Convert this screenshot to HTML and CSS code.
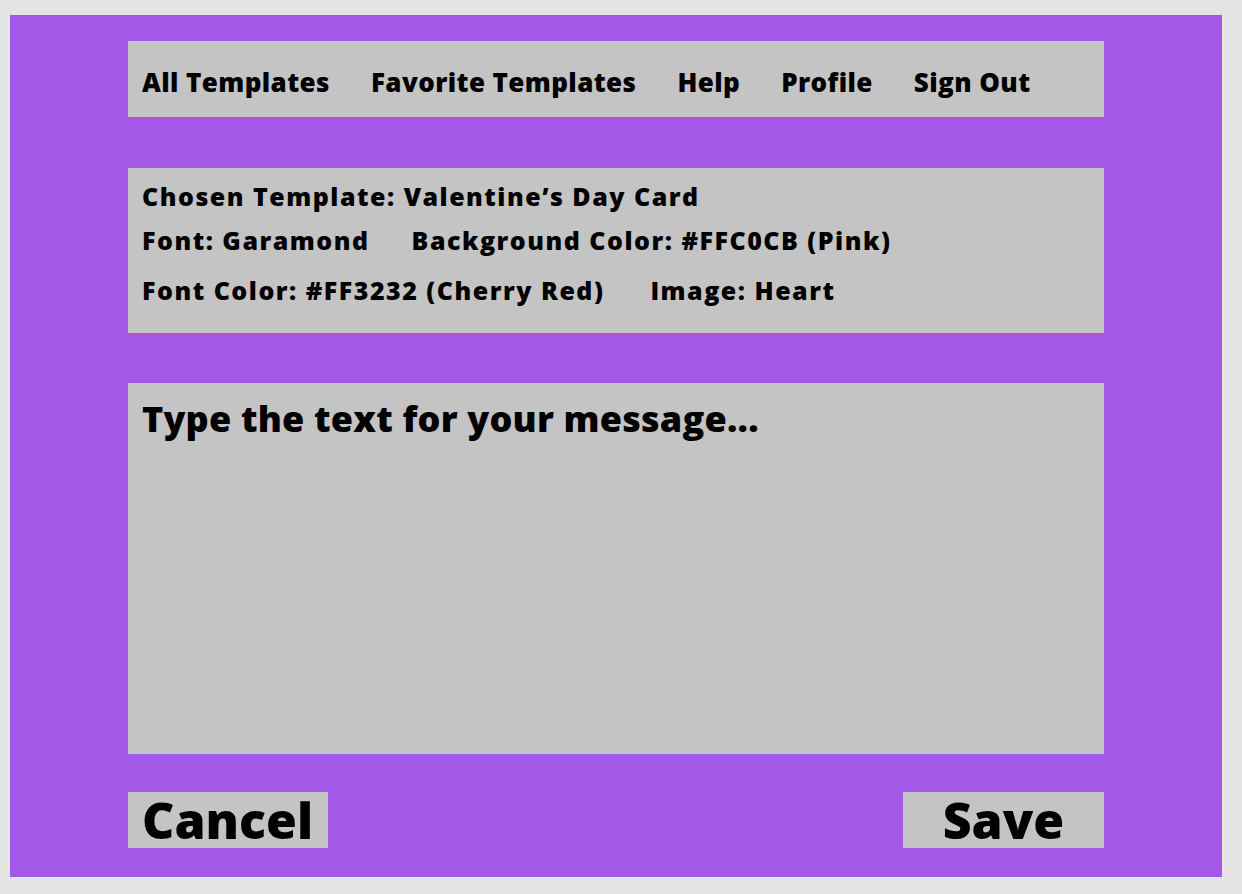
FILE: index.html
```html
<!DOCTYPE html>
<html lang="en">
<head>
  <meta charset="UTF-8">
  <title>Edit Card</title>
  <link rel="stylesheet" href="styles.css">
</head>
<body>
  <div class="panel">
    <nav class="nav">
      <a class="nav-link">All Templates</a>
      <a class="nav-link">Favorite Templates</a>
      <a class="nav-link">Help</a>
      <a class="nav-link">Profile</a>
      <a class="nav-link">Sign Out</a>
    </nav>

    <div class="info">
      <div class="info-row">Chosen Template: Valentine’s Day Card</div>
      <div class="info-row">
        <span class="item first-a">Font: Garamond</span>
        <span class="item">Background Color: #FFC0CB (Pink)</span>
      </div>
      <div class="info-row row-last">
        <span class="item first-b">Font Color: #FF3232 (Cherry Red)</span>
        <span class="item">Image: Heart</span>
      </div>
    </div>

    <div class="message">Type the text for your message...</div>

    <div class="actions">
      <button class="btn btn-cancel">Cancel</button>
      <button class="btn btn-save">Save</button>
    </div>
  </div>
</body>
</html>
```

FILE: styles.css
```css
body {
  margin: 0;
  background: #e5e5e5;
  font-family: "Open Sans", sans-serif;
  font-weight: 800;
  color: #000;
  padding: 15px 20px 17px 10px;
}
.panel {
  background: #a358e8;
  padding: 26px 118px 29px 118px;
  height: 807px;
}
.nav {
  display: flex;
  gap: 41px;
  align-items: center;
  background: #c4c4c4;
  height: 76px;
  padding: 6px 14px 0;
  box-sizing: border-box;
  font-size: 26px;
  letter-spacing: 0.4px;
}
.info {
  margin-top: 51px;
  background: #c4c4c4;
  height: 165px;
  box-sizing: border-box;
  padding: 6px 14px 0;
  font-size: 25px;
  letter-spacing: 1.5px;
}
.info-row {
  height: 44px;
  line-height: 44px;
}
.row-last {
  margin-top: 6px;
}
.first-a { margin-right: 34px; }
.first-b { margin-right: 38px; }
.message {
  margin-top: 50px;
  background: #c4c4c4;
  height: 371px;
  box-sizing: border-box;
  padding: 11px 14px;
  font-size: 36px;
  letter-spacing: 0.2px;
}
.actions {
  display: flex;
  justify-content: space-between;
  margin-top: 38px;
}
.btn {
  font-family: inherit;
  font-weight: 800;
  background: #c4c4c4;
  border: none;
  height: 56px;
  width: 200px;
  padding: 0 14px;
  font-size: 50px;
  line-height: 52px;
  color: #000;
}
.btn-cancel { text-align: left; }
.btn-save { width: 201px; text-align: center; }
```
